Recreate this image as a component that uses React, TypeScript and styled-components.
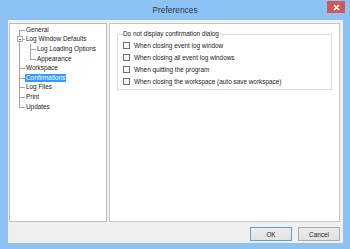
import React from 'react';
import styled, { createGlobalStyle } from 'styled-components';

type TreeItem = {
  label: string;
  level: number;
  guides: boolean[];
  last: boolean;
  first?: boolean;
  expander?: boolean;
  selected?: boolean;
};

const treeItems: TreeItem[] = [
  { label: 'General', level: 0, guides: [], last: false, first: true },
  { label: 'Log Window Defaults', level: 0, guides: [], last: false, expander: true },
  { label: 'Log Loading Options', level: 1, guides: [true], last: false },
  { label: 'Appearance', level: 1, guides: [true], last: true },
  { label: 'Workspace', level: 0, guides: [], last: false },
  { label: 'Confirmations', level: 0, guides: [], last: false, selected: true },
  { label: 'Log Files', level: 0, guides: [], last: false },
  { label: 'Print', level: 0, guides: [], last: false },
  { label: 'Updates', level: 0, guides: [], last: true },
];

const options = [
  'When closing event log window',
  'When closing all event log windows',
  'When quitting the program',
  'When closing the workspace (auto save workspace)',
];

function App() {
  return (
    <>
      <GlobalStyle />
      <Frame>
        <TitleBar>
          <Title>Preferences</Title>
          <CloseButton>
            <svg width="7" height="7" viewBox="0 0 7 7">
              <path d="M1 1L6 6M6 1L1 6" stroke="#fff" strokeWidth="1.6" />
            </svg>
          </CloseButton>
        </TitleBar>
        <Body>
          <Panels>
            <TreePanel>
              {treeItems.map((item) => (
                <TreeRow key={item.label}>
                  {item.guides.map((cont, i) => (
                    <Guide key={i} $mode={cont ? 'through' : 'none'} />
                  ))}
                  <Guide $mode={item.first ? 'bottom' : item.last ? 'top' : 'through'} $branch>
                    {item.expander && <Expander />}
                  </Guide>
                  <TreeLabel $selected={item.selected}>{item.label}</TreeLabel>
                </TreeRow>
              ))}
            </TreePanel>
            <PagePanel>
              <GroupBox>
                <Legend>Do not display confirmation dialog</Legend>
                {options.map((o) => (
                  <CheckRow key={o}>
                    <CheckBox />
                    <span>{o}</span>
                  </CheckRow>
                ))}
              </GroupBox>
            </PagePanel>
          </Panels>
          <ButtonRow>
            <DialogButton $primary>OK</DialogButton>
            <DialogButton>Cancel</DialogButton>
          </ButtonRow>
        </Body>
      </Frame>
    </>
  );
}

const GlobalStyle = createGlobalStyle`
  html, body {
    margin: 0;
    padding: 0;
    background: #8dc3f3;
  }
  * {
    box-sizing: border-box;
  }
`;

const Frame = styled.div`
  width: 350px;
  height: 249px;
  background: #8cc3f4;
  display: flex;
  flex-direction: column;
  font-family: 'Liberation Sans', Arial, sans-serif;
  font-size: 6.4px;
  color: #1a1a1a;
  overflow: hidden;
`;

const TitleBar = styled.div`
  height: 20px;
  display: flex;
  align-items: center;
  justify-content: center;
  position: relative;
`;

const Title = styled.div`
  font-size: 8.4px;
  color: #2b3a4a;
  margin-top: -1px;
`;

const CloseButton = styled.div`
  position: absolute;
  top: 1px;
  right: 5px;
  width: 18px;
  height: 12px;
  background: #cd5a5a;
  display: flex;
  align-items: center;
  justify-content: center;
`;

const Body = styled.div`
  flex: 1;
  margin: 0 7px 6px 8px;
  background: #f0f0f0;
  padding: 3px 3px 2px 1px;
  display: flex;
  flex-direction: column;
`;

const Panels = styled.div`
  flex: 1;
  display: flex;
  gap: 2px;
`;

const TreePanel = styled.div`
  width: 98px;
  background: #fff;
  border: 1px solid #bdbdbd;
  padding: 1px 0 0 5px;
`;

const TreeRow = styled.div`
  height: 9.6px;
  display: flex;
  align-items: center;
`;

const Guide = styled.span<{ $mode: 'through' | 'top' | 'bottom' | 'none'; $branch?: boolean }>`
  position: relative;
  width: ${(p) => (p.$branch ? '10px' : '11px')};
  height: 100%;
  flex: none;

  &::before {
    content: '';
    display: ${(p) => (p.$mode === 'none' ? 'none' : 'block')};
    position: absolute;
    left: 4px;
    width: 1px;
    top: ${(p) => (p.$mode === 'bottom' ? '50%' : '0')};
    bottom: ${(p) => (p.$mode === 'top' ? '50%' : '0')};
    background: #a6a6a6;
  }

  &::after {
    content: '';
    display: ${(p) => (p.$branch ? 'block' : 'none')};
    position: absolute;
    left: 4px;
    width: 6px;
    top: 50%;
    height: 1px;
    background: #a6a6a6;
  }
`;

const Expander = styled.span`
  position: absolute;
  left: 1.5px;
  top: 50%;
  margin-top: -3px;
  width: 6px;
  height: 6px;
  border: 1px solid #a8a8a8;
  background: #fff;
  z-index: 1;

  &::after {
    content: '';
    position: absolute;
    left: 1px;
    right: 1px;
    top: 1.5px;
    height: 1px;
    background: #555;
  }
`;

const TreeLabel = styled.span<{ $selected?: boolean }>`
  height: 7.8px;
  line-height: 7.8px;
  padding: 0 1px;
  white-space: nowrap;
  background: ${(p) => (p.$selected ? '#3399ff' : 'transparent')};
  color: ${(p) => (p.$selected ? '#fff' : 'inherit')};
`;

const PagePanel = styled.div`
  flex: 1;
  background: #fff;
  border: 1px solid #c6c6c6;
  padding: 6px 7px 0 7px;
`;

const GroupBox = styled.fieldset`
  margin: 0;
  border: 1px solid #dcdcdc;
  padding: 1px 5px 2px 5px;
  display: flex;
  flex-direction: column;
`;

const Legend = styled.legend`
  padding: 0;
  line-height: 8px;
  margin-left: 0;
`;

const CheckRow = styled.div`
  height: 12px;
  display: flex;
  align-items: center;
  gap: 4px;
  white-space: nowrap;
`;

const CheckBox = styled.span`
  width: 7px;
  height: 7px;
  border: 1px solid #6f6f6f;
  background: linear-gradient(#f4f4f4, #fff);
  flex: none;
`;

const ButtonRow = styled.div`
  height: 14px;
  margin-top: 5px;
  display: flex;
  justify-content: flex-end;
  gap: 6px;
`;

const DialogButton = styled.div<{ $primary?: boolean }>`
  width: 42px;
  height: 14px;
  display: flex;
  align-items: center;
  justify-content: center;
  border: 1px solid ${(p) => (p.$primary ? '#5aa2e6' : '#adadad')};
  background: linear-gradient(#ececec, #e2e2e2);
  font-size: 6.4px;
`;

export default App;
